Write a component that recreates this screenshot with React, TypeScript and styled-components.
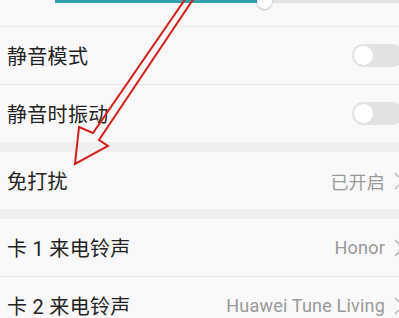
import styled, { createGlobalStyle } from "styled-components";

const GlobalStyle = createGlobalStyle`
  html, body {
    margin: 0;
    padding: 0;
    background: #f9f9f9;
    overflow: hidden;
  }
  body {
    font-family: "Roboto", "Noto Sans CJK SC", sans-serif;
  }
`;

const Screen = styled.div`
  position: relative;
  width: 404px;
  height: 318px;
  overflow: hidden;
  background: #f9f9f9;
`;

const SliderRow = styled.div`
  position: relative;
  height: 26px;
  border-bottom: 1px solid #e8e8e8;
`;

const Track = styled.div`
  position: absolute;
  top: 0;
  left: 55px;
  right: 0;
  height: 3px;
  background: #e3e3e3;
`;

const Fill = styled.div<{ $width: number }>`
  width: ${(p) => p.$width}px;
  height: 100%;
  background: #35a1ad;
`;

const Thumb = styled.div`
  position: absolute;
  top: -6px;
  left: 257px;
  width: 15px;
  height: 15px;
  border-radius: 50%;
  background: #ffffff;
  box-shadow: 0 1px 2px rgba(0, 0, 0, 0.25);
`;

const Row = styled.div<{ $last?: boolean }>`
  display: flex;
  align-items: center;
  justify-content: space-between;
  height: 57px;
  padding-left: 7px;
  border-bottom: ${(p) => (p.$last ? "none" : "1px solid #e8e8e8")};
`;

const Label = styled.span`
  font-size: 20px;
  color: #222222;
  letter-spacing: 0.3px;
`;

const Value = styled.span`
  display: flex;
  align-items: center;
  gap: 9px;
  font-size: 18px;
  letter-spacing: 0.2px;
  color: #9a9a9a;
`;

const Chevron = styled.svg`
  width: 10px;
  height: 18px;
`;

const Gap = styled.div`
  height: 10px;
  background: #efefef;
`;

const Toggle = styled.div`
  display: flex;
  align-items: center;
  width: 52px;
  height: 23px;
  border-radius: 12px;
  background: #e2e2e2;
  padding-left: 2px;
  box-sizing: border-box;
`;

const Knob = styled.div`
  width: 19px;
  height: 19px;
  border-radius: 50%;
  background: #ffffff;
`;

const Overlay = styled.svg`
  position: absolute;
  left: 0;
  top: 0;
  width: 399px;
  height: 318px;
  pointer-events: none;
`;

const More = ({ text }: { text: string }) => (
  <Value>
    {text}
    <Chevron viewBox="0 0 10 18">
      <path d="M1 1 L9 9 L1 17" fill="none" stroke="#b5b5b5" strokeWidth="1.4" />
    </Chevron>
  </Value>
);

const App = () => {
  return (
    <>
      <GlobalStyle />
      <Screen>
        <SliderRow>
          <Track>
            <Fill $width={209} />
          </Track>
          <Thumb />
        </SliderRow>
        <Row>
          <Label>静音模式</Label>
          <Toggle>
            <Knob />
          </Toggle>
        </Row>
        <Row $last>
          <Label>静音时振动</Label>
          <Toggle>
            <Knob />
          </Toggle>
        </Row>
        <Gap />
        <Row $last>
          <Label>免打扰</Label>
          <More text="已开启" />
        </Row>
        <Gap />
        <Row>
          <Label>卡 1 来电铃声</Label>
          <More text="Honor" />
        </Row>
        <Row $last>
          <Label>卡 2 来电铃声</Label>
          <More text="Huawei Tune Living" />
        </Row>

        {/* red hand-drawn arrow */}
        <Overlay viewBox="0 0 399 318">
          <path
            d="M186 -2 L93 133 L79 127 L75 164 L108 146 L99 140 L194 -2"
            fill="none"
            stroke="#d21f1b"
            strokeWidth="2"
            strokeLinejoin="miter"
          />
        </Overlay>
      </Screen>
    </>
  );
};

export default App;
